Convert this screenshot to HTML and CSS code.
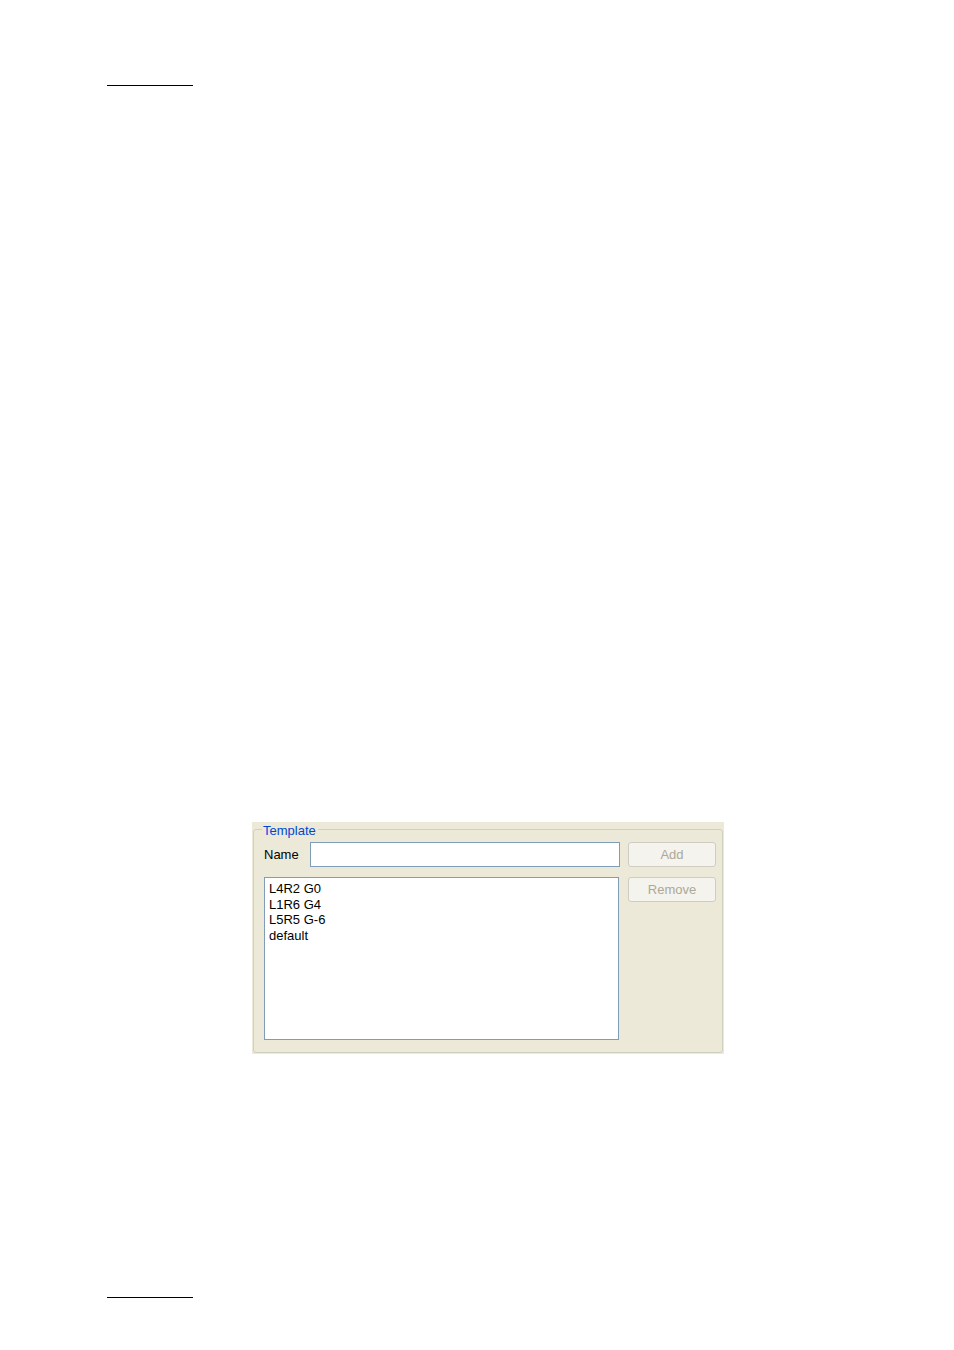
FILE: index.html
```html
<!DOCTYPE html>
<html>
<head>
<meta charset="utf-8">
<link rel="stylesheet" href="styles.css">
</head>
<body>
<div class="rule rule-top"></div>
<div class="figure">
  <div class="group">
    <span class="legend">Template</span>
    <div class="group-body">
      <div class="main">
        <div class="name-row">
          <span class="name-label">Name</span>
          <div class="name-input"></div>
        </div>
        <div class="list">
          <div class="item">L4R2 G0</div>
          <div class="item">L1R6 G4</div>
          <div class="item">L5R5 G-6</div>
          <div class="item">default</div>
        </div>
      </div>
      <div class="buttons">
        <div class="btn">Add</div>
        <div class="btn">Remove</div>
      </div>
    </div>
  </div>
</div>
<div class="rule rule-bottom"></div>
</body>
</html>
```
FILE: styles.css
```css
html, body {
  margin: 0;
  padding: 0;
  background: #fff;
}
body {
  width: 954px;
  height: 1350px;
  font-family: "Liberation Sans", Arial, sans-serif;
  font-size: 13px;
  color: #000;
  overflow: hidden;
}
.rule {
  width: 86px;
  margin-left: 107px;
  border-top: 1px solid #000;
}
.rule-top {
  margin-top: 85px;
}
.figure {
  margin: 736px 0 0 252px;
  width: 472px;
  height: 232px;
  box-sizing: border-box;
  background: #ECE9D8;
  padding: 7px 1px 0 1px;
}
.group {
  position: relative;
  width: 470px;
  height: 224px;
  box-sizing: border-box;
  border: 1px solid #D0D0BF;
  border-radius: 3px;
}
.legend {
  position: absolute;
  top: -7px;
  left: 8px;
  padding: 0 2px 0 1px;
  background: #ECE9D8;
  color: #0046D5;
  line-height: 15px;
}
.group-body {
  display: flex;
  gap: 8px;
  padding: 12px 0 0 10px;
}
.main {
  width: 356px;
  display: flex;
  flex-direction: column;
  gap: 10px;
}
.name-row {
  display: flex;
  align-items: center;
  height: 25px;
}
.name-label {
  width: 46px;
  line-height: 15px;
}
.name-input {
  width: 310px;
  height: 25px;
  box-sizing: border-box;
  border: 1px solid #7F9DB9;
  background: #fff;
}
.list {
  width: 355px;
  height: 163px;
  box-sizing: border-box;
  border: 1px solid #7F9DB9;
  background: #fff;
  padding: 3px 4px;
}
.item {
  line-height: 15.7px;
  white-space: nowrap;
}
.buttons {
  display: flex;
  flex-direction: column;
  gap: 10px;
}
.btn {
  width: 88px;
  height: 25px;
  box-sizing: border-box;
  border: 1px solid #CFCDC1;
  border-radius: 3px;
  background: #F4F3EE;
  color: #ACA899;
  display: flex;
  align-items: center;
  justify-content: center;
  line-height: 15px;
}
.rule-bottom {
  margin-top: 243px;
}
```
